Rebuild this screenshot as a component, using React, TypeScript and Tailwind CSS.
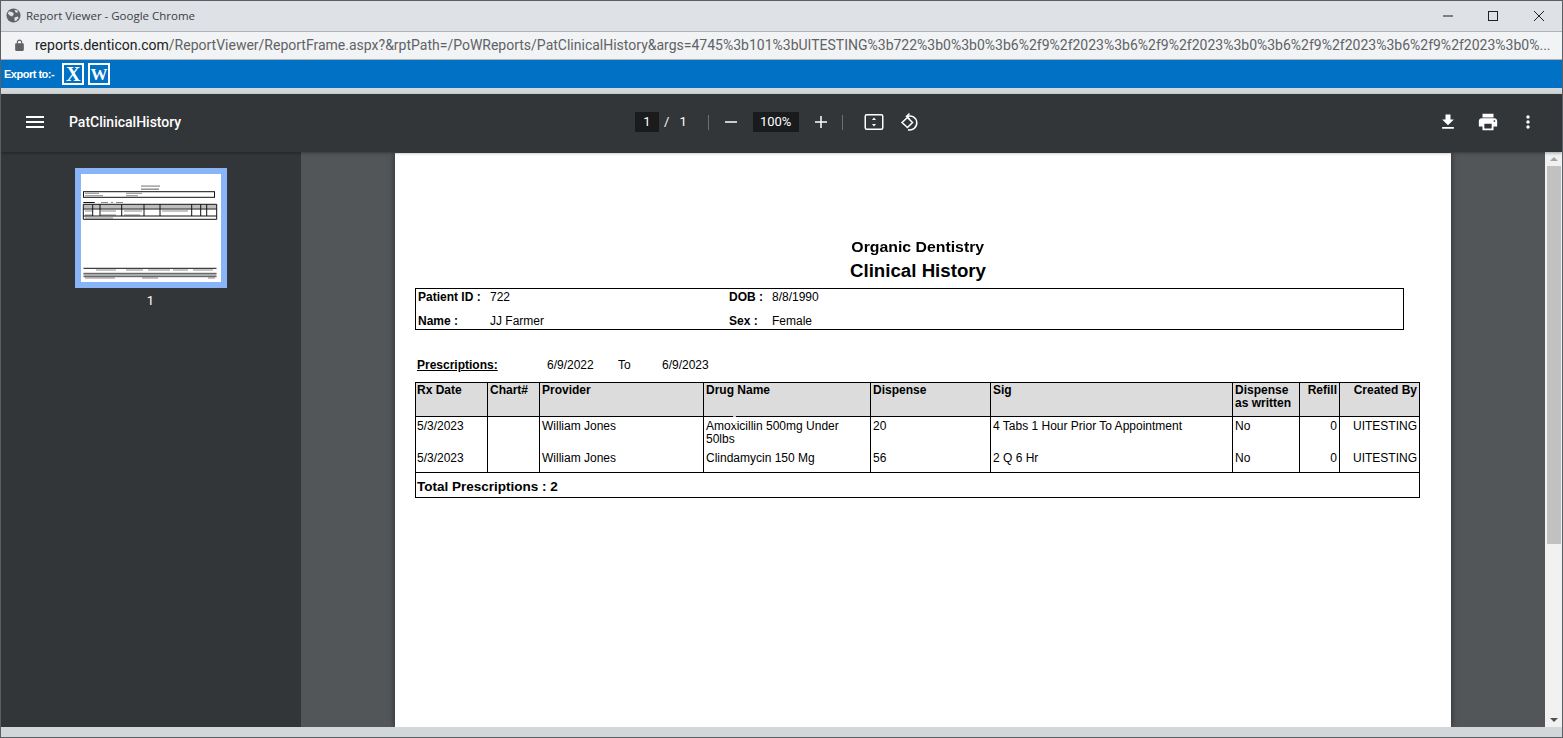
import React from 'react'

const docFont = "font-['Liberation_Sans',Arial,sans-serif]"

const urlRest =
  '/ReportViewer/ReportFrame.aspx?&rptPath=/PoWReports/PatClinicalHistory&args=4745%3b101%3bUITESTING%3b722%3b0%3b0%3b6%2f9%2f2023%3b6%2f9%2f2023%3b0%3b6%2f9%2f2023%3b6%2f9%2f2023%3b0%...'

function Mat({ d, className }: { d: string; className?: string }) {
  return (
    <svg viewBox="0 0 24 24" className={className} fill="currentColor">
      <path d={d} />
    </svg>
  )
}

function ChromeBar() {
  return (
    <>
      <div className="h-[30px] bg-[#dee1e6] flex items-center shrink-0">
        <svg viewBox="0 0 16 16" className="w-[15px] h-[15px] ml-[5px] mb-[1px]">
          <circle cx="8" cy="8" r="7.5" fill="#5f6368" />
          <path d="M3 3.5l4 1 1.5 2-2 2.5-2.5-1-2-2zM9 10l3.5-1 1 1.5-3 3.5-1.5-1zM9 2l3 .5 1 2-2.500.5z" fill="#dee1e6" />
        </svg>
        <span className="ml-[5px] text-[11.5px] text-[#3c4043] font-['Open_Sans',sans-serif]">
          Report Viewer - Google Chrome
        </span>
        <div className="ml-auto flex items-center text-[#202124]">
          <svg viewBox="0 0 12 12" className="w-[12px] h-[12px]">
            <path d="M1 6h10" stroke="currentColor" strokeWidth="1" />
          </svg>
          <svg viewBox="0 0 12 12" className="w-[12px] h-[12px] ml-[33px]">
            <rect x="1.500" y="1.500" width="9" height="9" fill="none" stroke="currentColor" strokeWidth="1" />
          </svg>
          <svg viewBox="0 0 12 12" className="w-[12px] h-[12px] ml-[34px] mr-[17px]">
            <path d="M1 1l10 10M11 1L1 11" stroke="currentColor" strokeWidth="1" />
          </svg>
        </div>
      </div>
      <div className="h-[29px] bg-[#f1f3f4] border-y border-[#aeb2b5] flex items-center shrink-0">
        <Mat
          className="w-[13px] h-[13px] ml-[12px] shrink-0 text-[#5f6368]"
          d="M18 8h-1V6c0-2.760-2.240-5-5-5S7 3.240 7 6v2H6c-1.100 0-2 .9-2 2v10c0 1.100.9 2 2 2h12c1.100 0 2-.9 2-2V10c0-1.100-.9-2-2-2zM9 6c0-1.660 1.340-3 3-3s3 1.340 3 3v2H9V6z"
        />
        <div className="ml-[9px] whitespace-nowrap text-[14px] font-['Roboto',sans-serif]">
          <span className="text-[#202124]">reports.denticon.com</span>
          <span className="text-[#5f6368]">{urlRest}</span>
        </div>
      </div>
    </>
  )
}

function ExportBar() {
  return (
    <div className="h-[28px] bg-[#0071c5] flex items-center shrink-0">
      <span className={`${docFont} ml-[3px] text-white font-bold text-[11px] tracking-[-0.5px]`}>Export to:-</span>
      <div className="ml-[8px] flex gap-[4px]">
        <div className="w-[22px] h-[22px] border-2 border-white flex items-center justify-center text-white font-bold text-[20px] leading-none font-['Liberation_Serif',serif]">
          X
        </div>
        <div className="w-[22px] h-[22px] border-2 border-white flex items-center justify-center text-white font-bold text-[17px] leading-none font-['Liberation_Serif',serif]">
          W
        </div>
      </div>
    </div>
  )
}

function ViewerToolbar() {
  return (
    <div className="h-[58px] pb-[2px] bg-[#323639] flex items-center text-white shrink-0 font-['Roboto',sans-serif] relative z-10 shadow-[0_1px_3px_rgba(0,0,0,0.35)]">
      <Mat className="w-[24px] h-[24px] ml-[22px]" d="M3 18h18v-2H3v2zm0-5h18v-2H3v2zm0-7v2h18V6H3z" />
      <span className="ml-[22px] w-[566px] text-[14px] font-medium">PatClinicalHistory</span>
      <div className="w-[24px] h-[20px] bg-[#191b1c] flex items-center justify-center text-[13px]">1</div>
      <span className="ml-[5px] text-[13px]">/</span>
      <span className="ml-[10px] text-[13px]">1</span>
      <div className="ml-[21px] w-px h-[15px] bg-[#6b6f72]" />
      <svg viewBox="0 0 14 14" className="ml-[15px] w-[14px] h-[14px]">
        <path d="M1 7h12" stroke="currentColor" strokeWidth="1.500" />
      </svg>
      <div className="ml-[15px] w-[46px] h-[20px] bg-[#191b1c] flex items-center justify-center text-[13px]">100%</div>
      <svg viewBox="0 0 14 14" className="ml-[15px] w-[14px] h-[14px]">
        <path d="M1 7h12M7 1v12" stroke="currentColor" strokeWidth="1.500" />
      </svg>
      <div className="ml-[14px] w-px h-[15px] bg-[#6b6f72]" />
      <svg viewBox="0 0 20 20" className="ml-[21px] w-[20px] h-[20px]">
        <rect x="1.250" y="2.750" width="17.500" height="14.500" rx="1.500" fill="none" stroke="currentColor" strokeWidth="1.500" />
        <path d="M10 5.500l2 2.500H8zM10 14.500L8 12h4z" fill="currentColor" />
      </svg>
      <svg viewBox="0 0 20 20" className="ml-[15px] w-[20px] h-[20px]" fill="none" stroke="currentColor" strokeWidth="1.500">
        <path d="M8.500 5.500L3 10.500l5.500 5 5-5z" />
        <path d="M8 4.500a7 7 0 1 1 1 13.200" />
        <path d="M10.500 1.500L7.500 4.500l3 2.500" />
      </svg>
      <Mat
        className="ml-[519px] w-[20px] h-[20px]"
        d="M19 9h-4V3H9v6H5l7 7 7-7zM5 18v2h14v-2H5z"
      />
      <Mat
        className="ml-[19px] w-[22px] h-[22px]"
        d="M19 8H5c-1.660 0-3 1.340-3 3v6h4v4h12v-4h4v-6c0-1.660-1.340-3-3-3zm-3 11H8v-5h8v5zm3-7c-.55 0-1-.45-1-1s.45-1 1-1 1 .45 1 1-.45 1-1 1zm-1-9H6v4h12V3z"
      />
      <Mat
        className="ml-[19px] w-[20px] h-[20px]"
        d="M12 8c1.100 0 2-.9 2-2s-.9-2-2-2-2 .9-2 2 .9 2 2 2zm0 2c-1.100 0-2 .9-2 2s.9 2 2 2 2-.9 2-2-.9-2-2-2zm0 6c-1.100 0-2 .9-2 2s.9 2 2 2 2-.9 2-2-.9-2-2-2z"
      />
    </div>
  )
}

function Sidebar() {
  return (
    <aside className="w-[300px] bg-[#323639] shrink-0 flex flex-col items-center pt-[16px] pr-[1px] text-white font-['Roboto',sans-serif]">
      <div className="w-[152px] h-[120px] border-[6px] border-[#8ab4f8] bg-white">
        <svg viewBox="0 0 140 108" className="w-[140px] h-[108px] blur-[0.4px]">
          <g fill="#8a8a8a">
            <rect x="60" y="11.500" width="19" height="1.200" />
            <rect x="60" y="14.500" width="18" height="1.400" />
            <rect x="4" y="18.800" width="14" height="1" />
            <rect x="45" y="18.800" width="16" height="1" />
            <rect x="4" y="21.200" width="18" height="1" />
            <rect x="45" y="21.200" width="12" height="1" />
            <rect x="20" y="28" width="7" height="1" />
            <rect x="30" y="28" width="2" height="1" />
            <rect x="35" y="28" width="7" height="1" />
            <rect x="20" y="36.500" width="15" height="1" />
            <rect x="43" y="36.500" width="18" height="1" />
            <rect x="81" y="36.500" width="26" height="1" />
            <rect x="4" y="36.500" width="7" height="1" />
            <rect x="4" y="40.500" width="7" height="1" />
            <rect x="20" y="40.500" width="15" height="1" />
            <rect x="43" y="40.500" width="16" height="1" />
            <rect x="4" y="43.500" width="28" height="1" />
            <rect x="15" y="95.500" width="20" height="1" />
            <rect x="45" y="95.500" width="17" height="1" />
            <rect x="67" y="95.500" width="22" height="1" />
            <rect x="92" y="95.500" width="15" height="1" />
            <rect x="112" y="95.500" width="20" height="1" />
            <rect x="4" y="103.500" width="30" height="1" />
            <rect x="61" y="103.500" width="16" height="1" />
            <rect x="127" y="103.500" width="7" height="1" />
          </g>
          <rect x="2.500" y="17.700" width="131" height="5.600" fill="none" stroke="#111" strokeWidth="1" />
          <rect x="2.300" y="28" width="11.400" height="1" fill="#111" />
          <rect x="2.800" y="30.500" width="133" height="4" fill="#bdbdbd" />
          <path
            d="M2.300 30.300h133.400M2.300 35h133.400M2.300 42h133.400M2.300 45.300h133.400M2.300 30.300v15M11.700 30.300v11.700M19 30.300v11.700M40.700 30.300v11.700M63 30.300v11.700M79 30.300v11.700M110.700 30.300v11.700M119.700 30.300v11.700M125.700 30.300v11.700M135.700 30.300v15"
            stroke="#111"
            strokeWidth="1"
            fill="none"
          />
          <path d="M2.500 94.300h133" stroke="#111" strokeWidth="1" />
          <rect x="2.500" y="99.300" width="133" height="3.400" fill="#aaa" />
          <path d="M2.500 99.300h133M2.500 102.700h133" stroke="#222" strokeWidth="0.700" />
        </svg>
      </div>
      <span className="mt-[6px] text-[13px] leading-[13px]">1</span>
    </aside>
  )
}

const headers = ['Rx Date', 'Chart#', 'Provider', 'Drug Name', 'Dispense', 'Sig']
const cols = ['w-[72px]', 'w-[52px]', 'w-[164px]', 'w-[167px]', 'w-[120px]', 'w-[242px]', 'w-[67px]', 'w-[40px]', 'w-[80px]']
const td = 'border-x border-black align-top pl-[2px] first:pl-[1px] leading-[13px]'

function Row({ drug, amount, sig, tall }: { drug: React.ReactNode; amount: string; sig: string; tall?: boolean }) {
  const cell = `${td} ${tall ? 'pt-[3px]' : 'pt-[2px]'}`
  return (
    <tr className={tall ? 'h-[33px]' : 'h-[23px]'}>
      <td className={cell}>5/3/2023</td>
      <td className={cell}></td>
      <td className={cell}>William Jones</td>
      <td className={cell}>{drug}</td>
      <td className={cell}>{amount}</td>
      <td className={cell}>{sig}</td>
      <td className={cell}>No</td>
      <td className={`${cell} text-right pr-[2px]`}>0</td>
      <td className={`${cell} text-right pr-[2px]`}>UITESTING</td>
    </tr>
  )
}

function Report() {
  return (
    <div className={`${docFont} w-[1056px] bg-white text-black shadow-[0_0_6px_rgba(0,0,0,0.5)] pl-[20px] pt-[86px] text-[12px] overflow-hidden`}>
      <div className="w-[1006px] text-center font-bold">
        <div className="text-[14px] leading-[16px]">
          <span className="inline-block scale-x-[1.13]">Organic Dentistry</span>
        </div>
        <div className="text-[18.7px] leading-[20px] mt-[6px]">Clinical History</div>
      </div>
      <div className="mt-[7px] w-[989px] h-[42px] border border-black grid grid-cols-[72px_239px_43px_1fr] grid-rows-[20px_20px] pl-[2px] items-center">
        <b className="pb-[4px]">Patient ID :</b>
        <span className="pb-[4px]">722</span>
        <b className="pb-[4px]">DOB :</b>
        <span className="pb-[4px]">8/8/1990</span>
        <b className="pt-[4px]">Name :</b>
        <span className="pt-[4px]">JJ Farmer</span>
        <b className="pt-[4px]">Sex :</b>
        <span className="pt-[4px]">Female</span>
      </div>
      <div className="mt-[28px] h-[14px] flex items-center pl-[2px] leading-[14px]">
        <b className="w-[130px] underline">Prescriptions:</b>
        <span className="w-[71px]">6/9/2022</span>
        <span className="w-[44px]">To</span>
        <span>6/9/2023</span>
      </div>
      <table className="mt-[10px] w-[1005px] table-fixed border-collapse border border-black">
        <colgroup>
          {cols.map((c, i) => (
            <col key={i} className={c} />
          ))}
        </colgroup>
        <tbody>
          <tr className="h-[34px] bg-[#dcdcdc] font-bold border-b border-black">
            {headers.map((h) => (
              <td key={h} className={`${td} pt-[1px]`}>
                {h}
              </td>
            ))}
            <td className={`${td} pt-[1px]`}>
              Dispense
              <br />
              as written
            </td>
            <td className={`${td} pt-[1px] text-right pr-[2px]`}>Refill</td>
            <td className={`${td} pt-[1px] text-right pr-[2px]`}>Created By</td>
          </tr>
          <Row
            tall
            amount="20"
            sig="4 Tabs 1 Hour Prior To Appointment"
            drug={
              <span className="relative block">
                Amoxicillin 500mg Under 50lbs
                <span className="absolute left-[27px] top-[-4px] w-[3px] h-[9px] bg-white/80" />
              </span>
            }
          />
          <Row amount="56" sig="2 Q 6 Hr" drug="Clindamycin 150 Mg" />
          <tr className="h-[24px] border-t border-black">
            <td colSpan={9} className="pl-[1px] pt-[4px] text-[13.500px] font-bold align-middle">
              Total Prescriptions : 2
            </td>
          </tr>
        </tbody>
      </table>
    </div>
  )
}

function Scrollbar() {
  return (
    <div className="w-[17px] bg-[#f1f1f1] shrink-0 flex flex-col items-center">
      <div className="mt-[5px] w-0 h-0 border-x-[4px] border-x-transparent border-b-[4px] border-b-[#a3a3a3]" />
      <div className="mt-[5px] w-[14px] h-[378px] bg-[#c1c1c1]" />
      <div className="mt-auto mb-[5px] w-0 h-0 border-x-[4px] border-x-transparent border-t-[4px] border-t-[#505050]" />
    </div>
  )
}

export default function App() {
  return (
    <div className="w-[1563px] h-[738px] border border-[#5b5f63] flex flex-col overflow-hidden bg-[#d2d7d9]">
      <ChromeBar />
      <ExportBar />
      <div className="h-[6px] bg-[#d2d7d9] shrink-0" />
      <ViewerToolbar />
      <div className="flex h-[575px] overflow-hidden">
        <Sidebar />
        <main className="flex-1 bg-[#525659] flex justify-center overflow-hidden pt-[1px]">
          <Report />
        </main>
        <Scrollbar />
      </div>
    </div>
  )
}
